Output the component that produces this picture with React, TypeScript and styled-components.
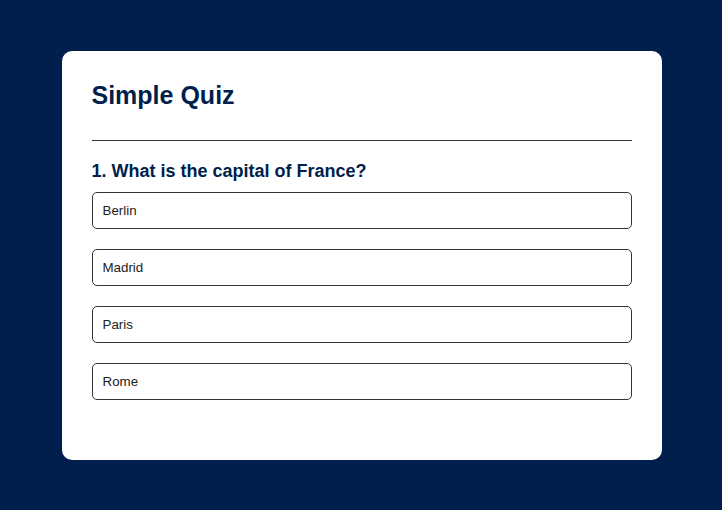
import React from "react";
import styled, { createGlobalStyle } from "styled-components";

const GlobalStyle = createGlobalStyle`
  html, body {
    margin: 0;
    padding: 0;
    background: #001f4d;
    font-family: "Liberation Sans", Arial, sans-serif;
  }
`;

const Page = styled.div`
  display: flex;
  justify-content: center;
  padding: 51px 0 50px 1px;
  min-height: 510px;
  box-sizing: border-box;
`;

const Card = styled.div`
  width: 600px;
  box-sizing: border-box;
  background: #ffffff;
  border-radius: 10px;
  padding: 30px 30px 60px;
`;

const Title = styled.h1`
  margin: 0;
  font-size: 25px;
  line-height: 28px;
  font-weight: bold;
  color: #001f4d;
`;

const Divider = styled.hr`
  margin: 31px 0 20px;
  border: none;
  border-top: 1px solid #333333;
  height: 0;
`;

const Question = styled.h2`
  margin: 0 0 10px;
  font-size: 18px;
  font-weight: bold;
  color: #001f4d;
`;

const Options = styled.div`
  display: flex;
  flex-direction: column;
  gap: 20px;
`;

const Option = styled.button`
  display: block;
  width: 100%;
  box-sizing: border-box;
  text-align: left;
  padding: 10px;
  font-family: "Liberation Sans", Arial, sans-serif;
  font-size: 13.333px;
  line-height: 15px;
  color: #222222;
  background: #ffffff;
  border: 1px solid #333333;
  border-radius: 5px;
  cursor: pointer;
`;

const options = ["Berlin", "Madrid", "Paris", "Rome"];

export default function App() {
  return (
    <>
      <GlobalStyle />
      <Page>
        <Card>
          <Title>Simple Quiz</Title>
          <Divider />
          <Question>1. What is the capital of France?</Question>
          <Options>
            {options.map((o) => (
              <Option key={o}>{o}</Option>
            ))}
          </Options>
        </Card>
      </Page>
    </>
  );
}
